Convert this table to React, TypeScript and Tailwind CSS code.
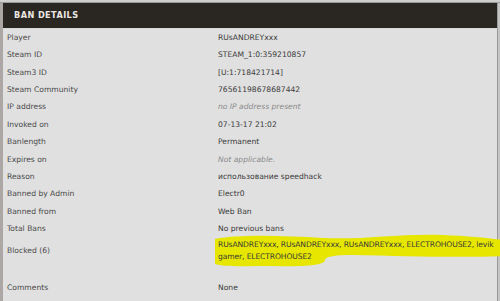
import React from "react";

const rows: { label: string; value: string; italic?: boolean }[] = [
  { label: "Player", value: "RUsANDREYxxx" },
  { label: "Steam ID", value: "STEAM_1:0:359210857" },
  { label: "Steam3 ID", value: "[U:1:718421714]" },
  { label: "Steam Community", value: "76561198678687442" },
  { label: "IP address", value: "no IP address present", italic: true },
  { label: "Invoked on", value: "07-13-17 21:02" },
  { label: "Banlength", value: "Permanent" },
  { label: "Expires on", value: "Not applicable.", italic: true },
  { label: "Reason", value: "использование speedhack" },
  { label: "Banned by Admin", value: "Electr0" },
  { label: "Banned from", value: "Web Ban" },
  { label: "Total Bans", value: "No previous bans" },
];

export default function App() {
  return (
    <div
      className="w-[500px] h-[301px] overflow-hidden bg-[#d4d4d4] flex flex-col"
      style={{ fontFamily: '"DejaVu Sans", Verdana, sans-serif' }}
    >
      <div className="h-[3px] bg-[#cfcfcf] border-b border-[#9a9a9a]" />
      <div className="flex flex-1 min-h-0">
        <div className="w-[3px] bg-[#aca7a4]" />
        <div className="flex-1 flex flex-col bg-[#e0e0e0] relative">
          <div className="h-[25px] bg-[#2a2622] flex items-center pl-[11px] text-[#ebe7e2] text-[8.2px] font-bold tracking-[0.4px]">
            BAN DETAILS
          </div>
          <div className="h-[1px] bg-[#d8d8d8]" />
          {rows.map((r) => (
            <div key={r.label} className="h-[17.4px] flex items-center text-[7.6px] leading-none">
              <div className="w-[215px] pl-[4px] text-[#4a4a4a]">{r.label}</div>
              <div className={r.italic ? "italic text-[#8a8a8a]" : "text-[#3a3a3a]"}>{r.value}</div>
            </div>
          ))}
          <div className="relative h-[26px] flex items-center text-[7.6px]">
            <svg
              className="absolute left-[210px] top-[-5px]"
              width="290"
              height="36"
              viewBox="0 0 290 36"
            >
              <path
                d="M2 6 C30 1 70 3 110 5 C150 7 190 0 230 2 C255 3 275 5 290 7 L290 23 C250 25 190 23 140 22 C120 22 112 24 112 27 C112 31 100 34 60 33 C30 33 10 34 2 31 Z"
                fill="#e6e600"
              />
            </svg>
            <div className="w-[215px] pl-[4px] text-[#4a4a4a] relative">Blocked (6)</div>
            <div className="relative w-[278px] text-[#3a3a3a] leading-[12px] tracking-[-0.12px]">
              RUsANDREYxxx, RUsANDREYxxx, RUsANDREYxxx, ELECTROHOUSE2, levik gamer, ELECTROHOUSE2
            </div>
          </div>
          <div className="h-[15px]" />
          <div className="h-[17.4px] flex items-center text-[7.6px] leading-none">
            <div className="w-[215px] pl-[4px] text-[#4a4a4a]">Comments</div>
            <div className="text-[#3a3a3a]">None</div>
          </div>
        </div>
        <div className="w-[3px] bg-[#c4c4c4] border-l border-[#9a9a9a]" />
      </div>
    </div>
  );
}
